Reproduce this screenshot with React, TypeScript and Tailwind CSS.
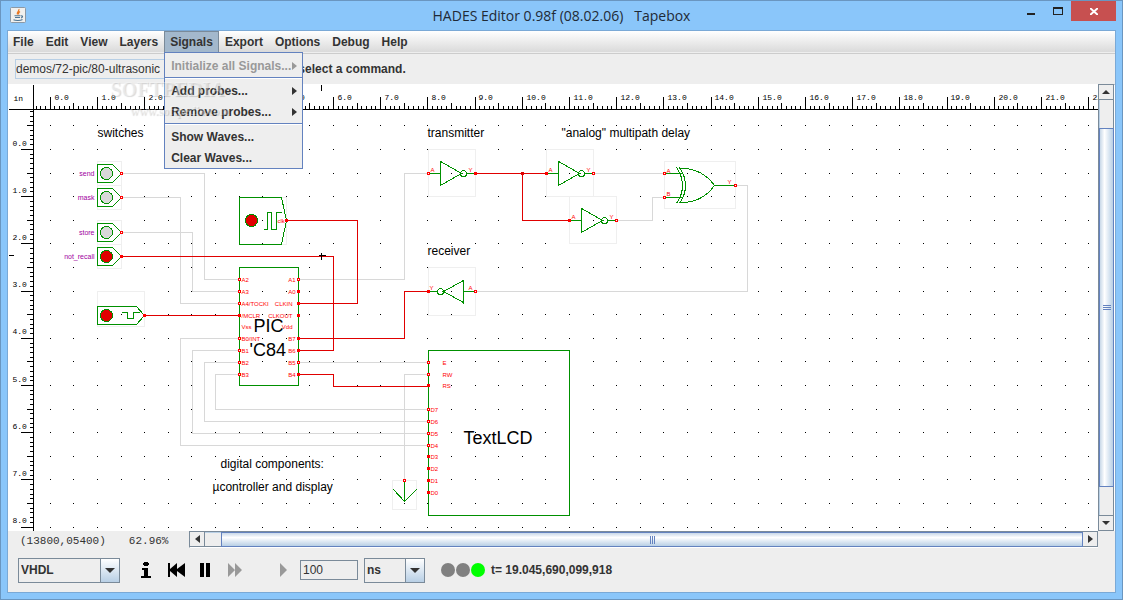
const GREEN = '#009000';
const RED = '#e00000';
const PIN = '#ff0000';
const WIRE = '#d8d8d8';
const FRAME = '#efefef';

const menusBefore = ['File', 'Edit', 'View', 'Layers'];
const menusAfter = ['Export', 'Options', 'Debug', 'Help'];

// schematic units: 47.2px per inch
const INCH = 47.2;

const range = (from: number, to: number) =>
  Array.from({ length: to - from }, (_, i) => from + i);

const tickLength = (i: number) => {
  if (i % 10 === 0) return 13;
  return i % 5 === 0 ? 7 : 4;
};

const Rulers = () => (
  <g>
    <g stroke="#000">
      <path d="M8 109H4000M33 84V3000M321 84v6M8 255h5" />
      {range(-3, 800).map((i) => {
        const x = Math.floor(50.2 + (i * INCH) / 10);
        return <path key={i} d={`M${x} 109v-${tickLength(i)}`} />;
      })}
      {range(-8, 500).map((i) => {
        const y = Math.floor(149.4 + (i * 47.22) / 10);
        return <path key={i} d={`M33 ${y}h-${tickLength(i)}`} />;
      })}
    </g>
    <g fontFamily='"Liberation Mono", monospace' fontSize="8">
      <text x="13" y="100">in</text>
      {range(0, 23).map((i) => (
        <text key={i} x={Math.floor(54 + i * INCH)} y="99">{i}.0</text>
      ))}
      {range(0, 9).map((i) => (
        <text key={i} x="12" y={Math.floor(145 + i * 47.22)}>{i}.0</text>
      ))}
    </g>
  </g>
);

const GridDots = () => (
  <g>
    {range(0, 60).map((row) =>
      range(0, 120).map((col) => (
        <rect
          key={`${row}-${col}`}
          x={Math.floor(50.2 + (col * INCH) / 2)}
          y={Math.floor(125.8 + (row * 47.22) / 2)}
          width="1"
          height="1"
        />
      )),
    )}
  </g>
);

const Pin = ({ x, y, on = false }: { x: number; y: number; on?: boolean }) => (
  <rect x={x - 1} y={y - 1} width="2" height="2" stroke={PIN} fill={on ? PIN : '#fff'} />
);

const PinName = ({ x, y, children, end }: { x: number; y: number; children: string; end?: boolean }) => (
  <text x={x} y={y} fontSize="6" fill={PIN} textAnchor={end ? 'end' : 'start'}>
    {children}
  </text>
);

const Inverter = ({ x, y, input, output }: { x: number; y: number; input?: boolean; output?: boolean }) => (
  <g>
    <rect x={x} y={y - 24} width="47" height="47" stroke={FRAME} />
    <path d={`M${x} ${y}h12M${x + 12} ${y - 12}v24M${x + 12} ${y - 12}l21 12l-21 12M${x + 38} ${y}h9`} stroke={GREEN} />
    <circle cx={x + 35} cy={y} r="3" stroke={GREEN} />
    <Pin x={x} y={y} on={input} />
    <Pin x={x + 47} y={y} on={output} />
    <PinName x={x + 2} y={y - 2}>A</PinName>
    <PinName x={x + 40} y={y - 2}>Y</PinName>
  </g>
);

const Switch = ({ y, name, on }: { y: number; name: string; on?: boolean }) => (
  <g>
    <rect x="97" y={y - 12} width="24" height="24" stroke={FRAME} />
    <path d={`M97 ${y - 9}h15l9 9l-9 9h-15z`} stroke={GREEN} />
    <circle cx="106" cy={y} r="6" stroke={GREEN} fill={on ? RED : WIRE} />
    <Pin x={121} y={y} on={on} />
    <text x="94" y={y + 2} fontSize="7" fill="#a000a0" textAnchor="end">{name}</text>
  </g>
);

const wires = [
  'M122 173H204V279H239',
  'M122 197H180V303H239',
  'M122 232H192V291H239',
  'M298 279H404V173H428',
  'M298 362H428',
  'M428 374H404V480',
  'M239 338H180V445H428',
  'M239 350H192V433H428',
  'M239 362H204V421H428',
  'M239 374H215V409H428',
  'M593 173H664',
  'M617 220H652V197H664',
  'M735 185H747V291H475',
];

const activeWires = [
  'M122 256H333V350H298',
  'M145 315H239',
  'M287 220H357V303H298',
  'M298 338H404V291H428',
  'M298 374H333V386H428',
  'M475 173H546',
  'M522 173V220H569',
];

const picPins = [
  { y: 279, left: 'A2', right: 'A1' },
  { y: 291, left: 'A3', right: 'A0', rightOn: true },
  { y: 303, left: 'A4/TOCKI', right: 'CLKIN', rightOn: true },
  { y: 315, left: '/MCLR', right: 'CLKOUT', leftOn: true, rightOn: true },
  { y: 338, left: 'B0/INT', right: 'B7', rightOn: true },
  { y: 350, left: 'B1', right: 'B6', rightOn: true },
  { y: 362, left: 'B2', right: 'B5' },
  { y: 374, left: 'B3', right: 'B4', rightOn: true },
];

const lcdPins = [
  { y: 362, name: 'E', x: 442 },
  { y: 374, name: 'RW', x: 442 },
  { y: 385, name: 'RS', x: 442, on: true },
  { y: 409, name: 'D7', x: 430 },
  { y: 421, name: 'D6', x: 430 },
  { y: 433, name: 'D5', x: 430 },
  { y: 445, name: 'D4', x: 430 },
  { y: 456, name: 'D3', x: 430, on: true },
  { y: 468, name: 'D2', x: 430, on: true },
  { y: 480, name: 'D1', x: 430, on: true },
  { y: 492, name: 'D0', x: 430, on: true },
];

const Schematic = () => (
  <svg
    className="h-full w-full"
    fill="none"
    shapeRendering="crispEdges"
    fontFamily='"Liberation Sans", sans-serif'
    fontWeight="normal"
    role="img"
    aria-label="Tapebox schematic"
  >
    <svg x="26" y="26" width="100%" height="100%">
      <g transform="translate(-34 -110)" fill="#000">
        <GridDots />
      </g>
    </svg>
    <g transform="translate(-7.5 -83.5)">
      {wires.map((d) => <path key={d} d={d} stroke={WIRE} />)}
      {activeWires.map((d) => <path key={d} d={d} stroke={RED} />)}
      <circle cx="522" cy="173" r="2" fill={RED} />

      {/* switches */}
      <Switch y={173} name="send" />
      <Switch y={197} name="mask" />
      <Switch y={232} name="store" />
      <Switch y={256} name="not_recall" on />

      {/* reset pulse */}
      <rect x="97" y="291" width="47" height="35" stroke={FRAME} />
      <path d="M97 306h39l8 9l-8 9H97zM121 312h6v6h6v-6h6" stroke={GREEN} />
      <circle cx="106" cy="315" r="6" fill={RED} stroke={GREEN} />
      <Pin x={144} y={315} on />

      {/* clock */}
      <rect x="239" y="197" width="47" height="47" stroke={FRAME} />
      <path d="M239 197h42l5 23l-5 24h-42zM263 229h4v-17h4v17h5v-17h5" stroke={GREEN} />
      <circle cx="251" cy="220" r="6" fill={RED} stroke={GREEN} />
      <PinName x={277} y={222}>clk</PinName>
      <Pin x={286} y={220} on />

      {/* PIC */}
      <rect x="239" y="267" width="59" height="118" stroke={GREEN} />
      {picPins.map((pin) => (
        <g key={pin.y}>
          <Pin x={239} y={pin.y} on={pin.leftOn} />
          <Pin x={298} y={pin.y} on={pin.rightOn} />
          <PinName x={241} y={pin.y + 2}>{pin.left}</PinName>
          <PinName x={pin.right.length > 2 ? 292 : 295} y={pin.y + 2} end>{pin.right}</PinName>
        </g>
      ))}
      <PinName x={241} y={328}>Vss</PinName>
      <PinName x={292} y={328} end>Vdd</PinName>

      {/* gates */}
      <Inverter x={428} y={173} output />
      <Inverter x={546} y={173} input />
      <Inverter x={569} y={220} input />
      <rect x="428" y="267" width="47" height="48" stroke={FRAME} />
      <path d="M475 291h-12M463 279v24M463 280l-20 11l20 11M437 291h-9" stroke={GREEN} />
      <circle cx="440" cy="291" r="3" stroke={GREEN} />
      <Pin x={428} y={291} on />
      <Pin x={475} y={291} />
      <PinName x={429} y={289}>Y</PinName>
      <PinName x={468} y={289}>A</PinName>

      <rect x="664" y="161" width="71" height="47" stroke={FRAME} />
      <path d="M664 173h17M664 197h17M714 185h21" stroke={GREEN} />
      <path d="M676 167Q688 185 676 203M679 167Q691 185 679 203M679 168Q701 167 714 185Q701 203 679 202" stroke={GREEN} />
      <Pin x={664} y={173} />
      <Pin x={664} y={197} />
      <Pin x={735} y={185} />
      <PinName x={666} y={172}>A</PinName>
      <PinName x={666} y={195}>B</PinName>
      <PinName x={727} y={183}>Y</PinName>

      {/* display */}
      <rect x="428" y="350" width="141" height="165" stroke={GREEN} />
      {lcdPins.map((pin) => (
        <g key={pin.name}>
          <Pin x={428} y={pin.y} on={pin.on} />
          <PinName x={pin.x} y={pin.y + 2}>{pin.name}</PinName>
        </g>
      ))}

      {/* ground */}
      <rect x="392" y="480" width="24" height="29" stroke={FRAME} />
      <path d="M404 480v21M393 489l11 12l12-12" stroke={GREEN} />
      <Pin x={404} y={480} />

      <g fill="#000" fontSize="12">
        <text x="97" y="136">switches</text>
        <text x="427" y="136">transmitter</text>
        <text x="561" y="136">"analog" multipath delay</text>
        <text x="427" y="254">receiver</text>
        <text x="220" y="467">digital components:</text>
        <text x="212" y="490">µcontroller and display</text>
      </g>
      <g fill="#000" fontSize="18">
        <text x="253" y="331">PIC</text>
        <text x="249" y="355">'C84</text>
        <text x="463" y="443">TextLCD</text>
      </g>
      <path d="M318 255h7M321 252v7" stroke="#000" />
    </g>
    <g transform="translate(-7.5 -83.5)" fill="#000">
      <Rulers />
    </g>
  </svg>
);

const JavaIcon = () => (
  <svg className="h-4 w-4" viewBox="0 0 16 16" fill="none" aria-hidden="true">
    <rect x="0.5" y="0.5" width="15" height="15" rx="1" fill="#f0f0ee" stroke="#8b99a6" />
    <path d="M8.800 2.200C10 4 6 4.800 7.500 7.500M10 4.500C8.500 5.500 8 6.200 9 7.500" stroke="#e8761f" strokeWidth="1.200" />
    <path d="M4.500 8.800h6M5 10.500h5M11 9c2.200-.6 2 1.500 0 2M3.500 12.800c2 1 7 1 9-.3" stroke="#4d7594" strokeWidth="1.100" />
  </svg>
);

const Arrow = ({ dir, className = 'text-[#333]' }: { dir: 'up' | 'down' | 'left' | 'right'; className?: string }) => {
  const shapes = {
    up: { w: 8, h: 4, d: 'M0 4L4 0L8 4z' },
    down: { w: 8, h: 4, d: 'M0 0L4 4L8 0z' },
    left: { w: 5, h: 8, d: 'M5 0L0 4L5 8z' },
    right: { w: 5, h: 8, d: 'M0 0L5 4L0 8z' },
  };
  const { w, h, d } = shapes[dir];
  return (
    <svg className={`shrink-0 ${className}`} width={w} height={h} aria-hidden="true">
      <path d={d} fill="currentColor" />
    </svg>
  );
};

const TitleBar = () => (
  <header className="grid h-[29px] shrink-0 grid-cols-[1fr_auto_1fr]">
    <div className="pt-1.5 pl-[3px]">
      <JavaIcon />
    </div>
    <h1 className="font-['Open_Sans',sans-serif] text-sm leading-[29px] font-normal whitespace-pre text-[#1f2a36]">
      HADES Editor 0.98f (08.02.06)   Tapebox
    </h1>
    <div className="flex items-start justify-end">
      <button type="button" aria-label="Minimize" className="flex h-5 w-[26px] justify-center">
        <span className="mt-3 h-0.5 w-2 bg-[#222]" />
      </button>
      <button type="button" aria-label="Maximize" className="flex h-5 w-[27px] justify-center">
        <span className="mt-1.5 h-2 w-2.5 border border-t-2 border-[#222]" />
      </button>
      <button type="button" aria-label="Close" className="flex h-5 w-[45px] items-center justify-center bg-[#c75050]">
        <svg width="8" height="7" stroke="#fff" strokeWidth="2" aria-hidden="true">
          <path d="M0 0L8 7M8 0L0 7" />
        </svg>
      </button>
    </div>
  </header>
);

const MenuItem = ({ label, submenu, disabled }: { label: string; submenu?: boolean; disabled?: boolean }) => (
  <li>
    <button
      type="button"
      disabled={disabled}
      className="flex h-[21px] w-full items-center justify-between pr-[5px] pl-1.5 disabled:text-[#999]"
    >
      {label}
      {submenu && <Arrow dir="right" className={disabled ? 'text-[#999]' : 'text-[#333]'} />}
    </button>
  </li>
);

const Separator = () => <li role="separator" className="my-px h-0.5 border-t border-[#6382bf] bg-white" />;

const MenuBar = () => (
  <nav className="border-b border-[#ccc] pb-px">
    <ul className="flex h-[21px] bg-linear-to-b from-white to-[#dadada]">
      {menusBefore.map((name) => (
        <li key={name} className="flex first:-ml-px">
          <button type="button" className="px-1.5">{name}</button>
        </li>
      ))}
      <li className="relative flex">
        <button type="button" aria-expanded="true" className="border border-b-0 border-[#7a8a99] bg-[#a3b8cc] px-[5px]">
          Signals
        </button>
        <ul className="absolute top-full left-0 z-10 w-[139px] border border-[#6382bf] bg-[#eee] pt-0.5 whitespace-nowrap">
          <MenuItem label="Initialize all Signals..." submenu disabled />
          <Separator />
          <MenuItem label="Add probes..." submenu />
          <MenuItem label="Remove probes..." submenu />
          <Separator />
          <MenuItem label="Show Waves..." />
          <MenuItem label="Clear Waves..." />
        </ul>
      </li>
      {menusAfter.map((name) => (
        <li key={name} className="flex">
          <button type="button" className="px-1.5">{name}</button>
        </li>
      ))}
    </ul>
  </nav>
);

const CommandBar = () => (
  <div className="flex h-[30px] items-center gap-1 pl-[7px]">
    <input
      aria-label="Design file"
      defaultValue="demos/72-pic/80-ultrasonic"
      className="h-5 w-[238px] border border-[#b8cfe5] font-normal"
    />
    <span>Please select a command.</span>
  </div>
);

const VerticalScrollbar = () => (
  <div className="flex w-[17px] flex-col border-x border-t border-[#7a8a99] border-r-white">
    <button type="button" aria-label="Scroll up" className="flex h-[15px] items-center justify-center border-r border-b border-[#7a8a99]">
      <Arrow dir="up" />
    </button>
    <div className="h-7 border-r border-l border-[#7a8a99] border-l-[#b8cfe5]" />
    <div className="flex min-h-0 flex-1 flex-col items-center justify-center gap-px border border-[#6382bf] bg-linear-to-r from-[#c8d8e8] via-white via-35% to-[#b8cfe5]">
      <span className="h-px w-2 bg-[#6382bf]" />
      <span className="h-px w-2 bg-[#6382bf]" />
      <span className="h-px w-2 bg-[#6382bf]" />
    </div>
    <div className="h-7 border-r border-l border-[#7a8a99] border-l-[#b8cfe5]" />
    <button type="button" aria-label="Scroll down" className="flex h-4 items-center justify-center border-y border-r border-[#7a8a99]">
      <Arrow dir="down" />
    </button>
  </div>
);

const HorizontalScrollbar = () => (
  <div className="mr-[17px] flex h-[17px] flex-1 border-y border-l border-[#7a8a99] border-b-white">
    <button type="button" aria-label="Scroll left" className="flex w-[15px] items-center justify-center border-r border-b border-[#7a8a99]">
      <Arrow dir="left" />
    </button>
    <div className="w-4 border-y border-[#7a8a99] border-t-[#b8cfe5]" />
    <div className="flex flex-1 items-center justify-center gap-px border border-[#6382bf] bg-linear-to-b from-[#c8d8e8] via-white via-35% to-[#b8cfe5]">
      <span className="h-2 w-px bg-[#6382bf]" />
      <span className="h-2 w-px bg-[#6382bf]" />
      <span className="h-2 w-px bg-[#6382bf]" />
    </div>
    <button type="button" aria-label="Scroll right" className="flex w-[15px] items-center justify-center border-r border-b border-[#7a8a99]">
      <Arrow dir="right" />
    </button>
  </div>
);

const Combo = ({ label, options, className }: { label: string; options: string[]; className: string }) => (
  <div className={`relative ${className}`}>
    <select
      aria-label={label}
      className="h-[25px] w-full appearance-none border border-[#7a8a99] bg-[#eee] pl-0.5 font-bold"
    >
      {options.map((option) => <option key={option}>{option}</option>)}
    </select>
    <span className="pointer-events-none absolute inset-y-0 right-0 flex w-5 items-center justify-center border border-[#7a8a99] bg-linear-to-b from-white to-[#b8cfe5]">
      <svg className="shrink-0" width="10" height="5" aria-hidden="true">
        <path d="M0 0h10L5 5z" fill="#333" />
      </svg>
    </span>
  </div>
);

const SimulationBar = () => (
  <footer className="flex h-11 items-center pl-2.5">
    <Combo label="Language" options={['VHDL', 'Verilog']} className="w-[102px]" />
    <button type="button" aria-label="Info" className="ml-[21px]">
      <svg width="10" height="16" shapeRendering="crispEdges">
        <path d="M3 0h4v1h1v2H7v1H3V3H2V1h1zM1 6h6v8h3v2H0v-2h3V8H1z" fill="#000" />
      </svg>
    </button>
    <button type="button" aria-label="Reset" className="ml-[17px]">
      <svg width="17" height="14">
        <path d="M0 0h2v6L9 0v6l8-6v14L9 8v6L2 8v6H0z" fill="#000" />
      </svg>
    </button>
    <button type="button" aria-label="Pause" className="ml-[15px]">
      <svg width="10" height="14">
        <path d="M0 0h4v14H0zM6 0h4v14H6z" fill="#000" />
      </svg>
    </button>
    <button type="button" aria-label="Run" className="ml-[18px]">
      <svg width="14" height="14">
        <path d="M0 0l7 7l-7 7zM7 0l7 7l-7 7z" fill="#999" />
      </svg>
    </button>
    <button type="button" aria-label="Run for" className="ml-[38px]">
      <svg width="7" height="14">
        <path d="M0 0l7 7l-7 7z" fill="#999" />
      </svg>
    </button>
    <input
      aria-label="Run time"
      defaultValue="100"
      className="mr-1.5 ml-[13px] h-5 w-[58px] border border-[#7a8a99] pl-0.5 font-normal"
    />
    <Combo label="Time unit" options={['ns', 'us', 'ms']} className="w-[61px]" />
    <div className="ml-4 flex gap-px">
      <span className="h-3.5 w-3.5 rounded-full bg-[#808080]" />
      <span className="h-3.5 w-3.5 rounded-full bg-[#808080]" />
      <span className="h-3.5 w-3.5 rounded-full bg-[#00ff00]" />
    </div>
    <output className="ml-1.5">t= 19.045,690,099,918</output>
  </footer>
);

const Watermark = () => (
  <div
    aria-hidden="true"
    className="pointer-events-none absolute top-[76px] left-[109px] z-20 font-['Liberation_Serif',serif] text-white/40 [text-shadow:1px_1px_1px_#00000026]"
  >
    <p className="text-xl leading-6">SOFTPEDIA<sup className="text-[8px]">™</sup></p>
    <p className="pl-5 text-xs leading-5 font-bold">www.softpedia.com</p>
  </div>
);

export default function App() {
  return (
    <div className="relative flex h-screen flex-col overflow-hidden border border-[#6a96c0] bg-[#8ac6fa] px-1.5 pb-1.5 font-['Liberation_Sans',sans-serif] text-xs font-bold text-[#333]">
      <TitleBar />
      <main className="flex min-h-0 flex-1 flex-col border border-[#7aa9d6] bg-[#eee]">
        <MenuBar />
        <CommandBar />
        <div className="flex min-h-0 flex-1">
          <div className="min-w-0 flex-1 overflow-hidden bg-white">
            <Schematic />
          </div>
          <VerticalScrollbar />
        </div>
        <div className="flex h-[17px]">
          <div className="flex w-[181px] items-center gap-[23px] pt-1 pl-3 font-['Liberation_Mono',monospace] text-[11px] font-normal">
            <span>(13800,05400)</span>
            <span>62.96%</span>
          </div>
          <HorizontalScrollbar />
        </div>
        <SimulationBar />
      </main>
      <Watermark />
    </div>
  );
}
